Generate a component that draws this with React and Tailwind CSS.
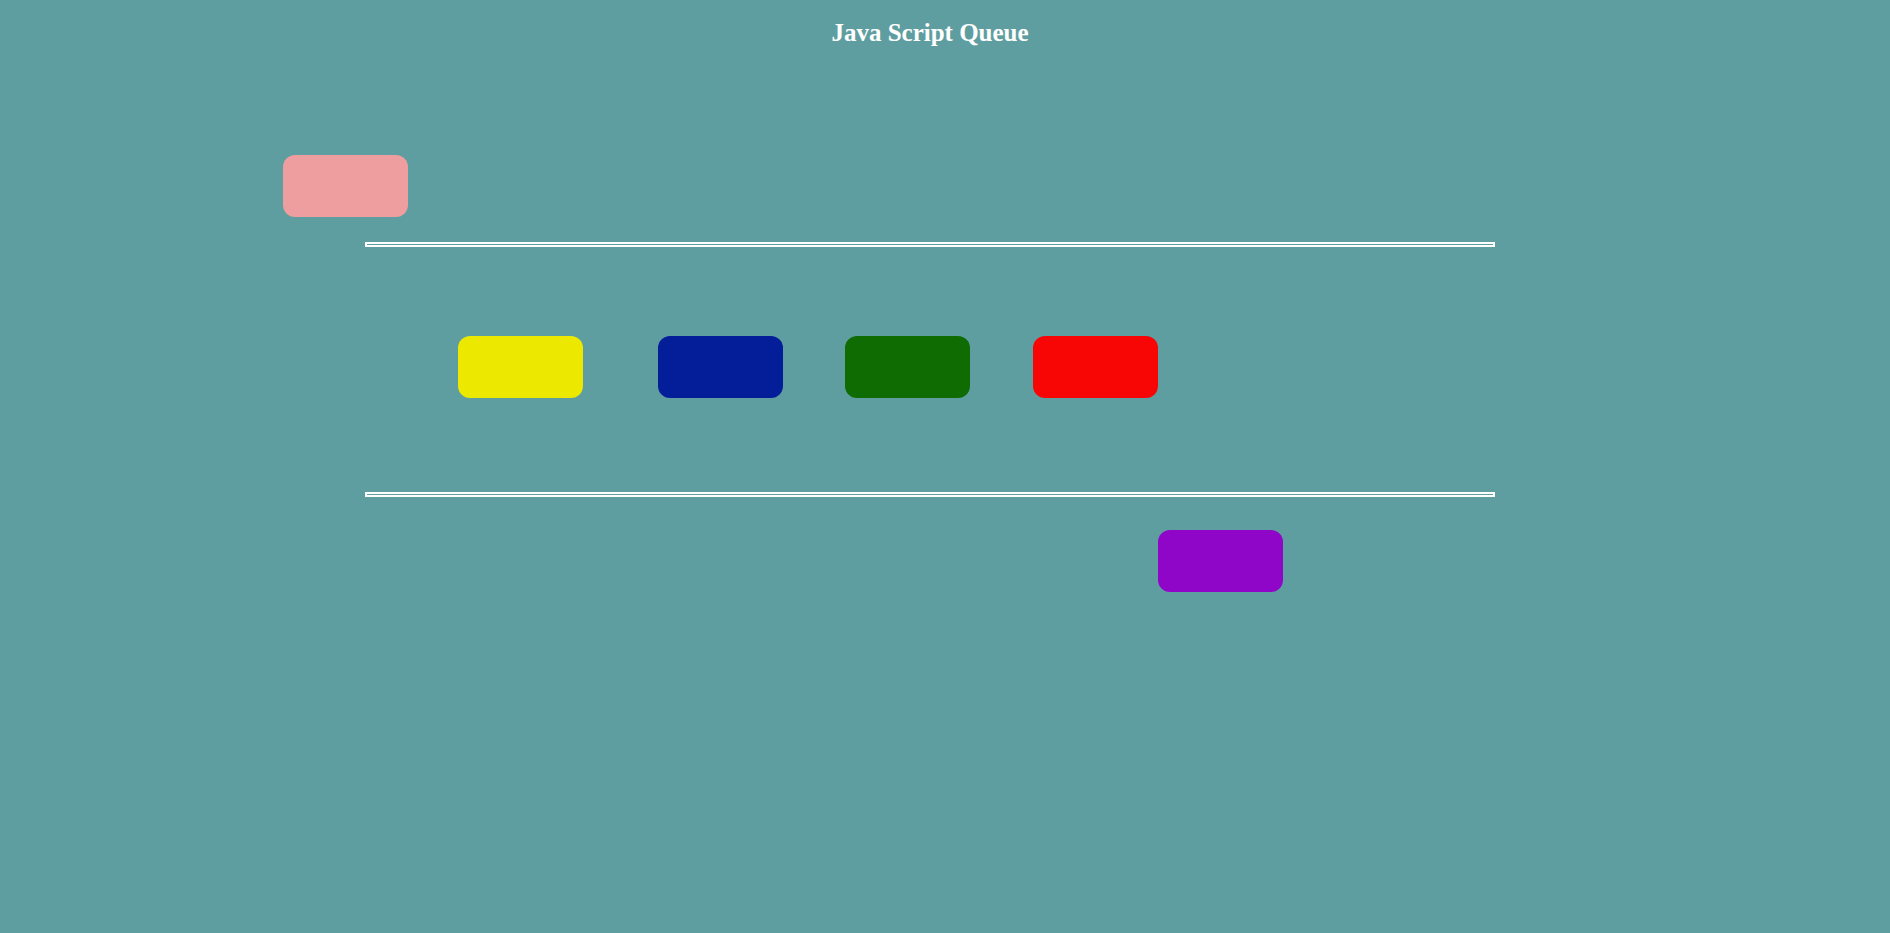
import React from "react";

const Box = ({ color, className = "" }) => (
  <div className={`w-[125px] h-[62px] rounded-[12px] shrink-0 ${color} ${className}`} />
);

const Rail = () => (
  <div className="ml-[365px] w-[1130px] h-[5px] border-2 border-white" />
);

export default function App() {
  return (
    <div className="min-h-[933px] w-full bg-[#5f9ea0] font-['Liberation_Serif',serif] overflow-hidden">
      {/* title */}
      <div className="pt-[19px] pr-[30px] flex justify-center">
        <h2 className="text-[25px] leading-[28px] font-bold text-white">Java Script Queue</h2>
      </div>

      {/* element waiting to enqueue */}
      <div className="mt-[108px] pl-[283px]">
        <Box color="bg-[#ee9e9e]" />
      </div>

      <div className="mt-[25px]">
        <Rail />
      </div>

      {/* queue */}
      <div className="mt-[89px] flex pl-[458px]">
        <Box color="bg-[#ece800]" />
        <Box color="bg-[#041e99]" className="ml-[75px]" />
        <Box color="bg-[#0e6c02]" className="ml-[62px]" />
        <Box color="bg-[#f80505]" className="ml-[63px]" />
      </div>

      <div className="mt-[94px]">
        <Rail />
      </div>

      {/* dequeued element */}
      <div className="mt-[33px] pl-[1158px]">
        <Box color="bg-[#9006c8]" />
      </div>
    </div>
  );
}
